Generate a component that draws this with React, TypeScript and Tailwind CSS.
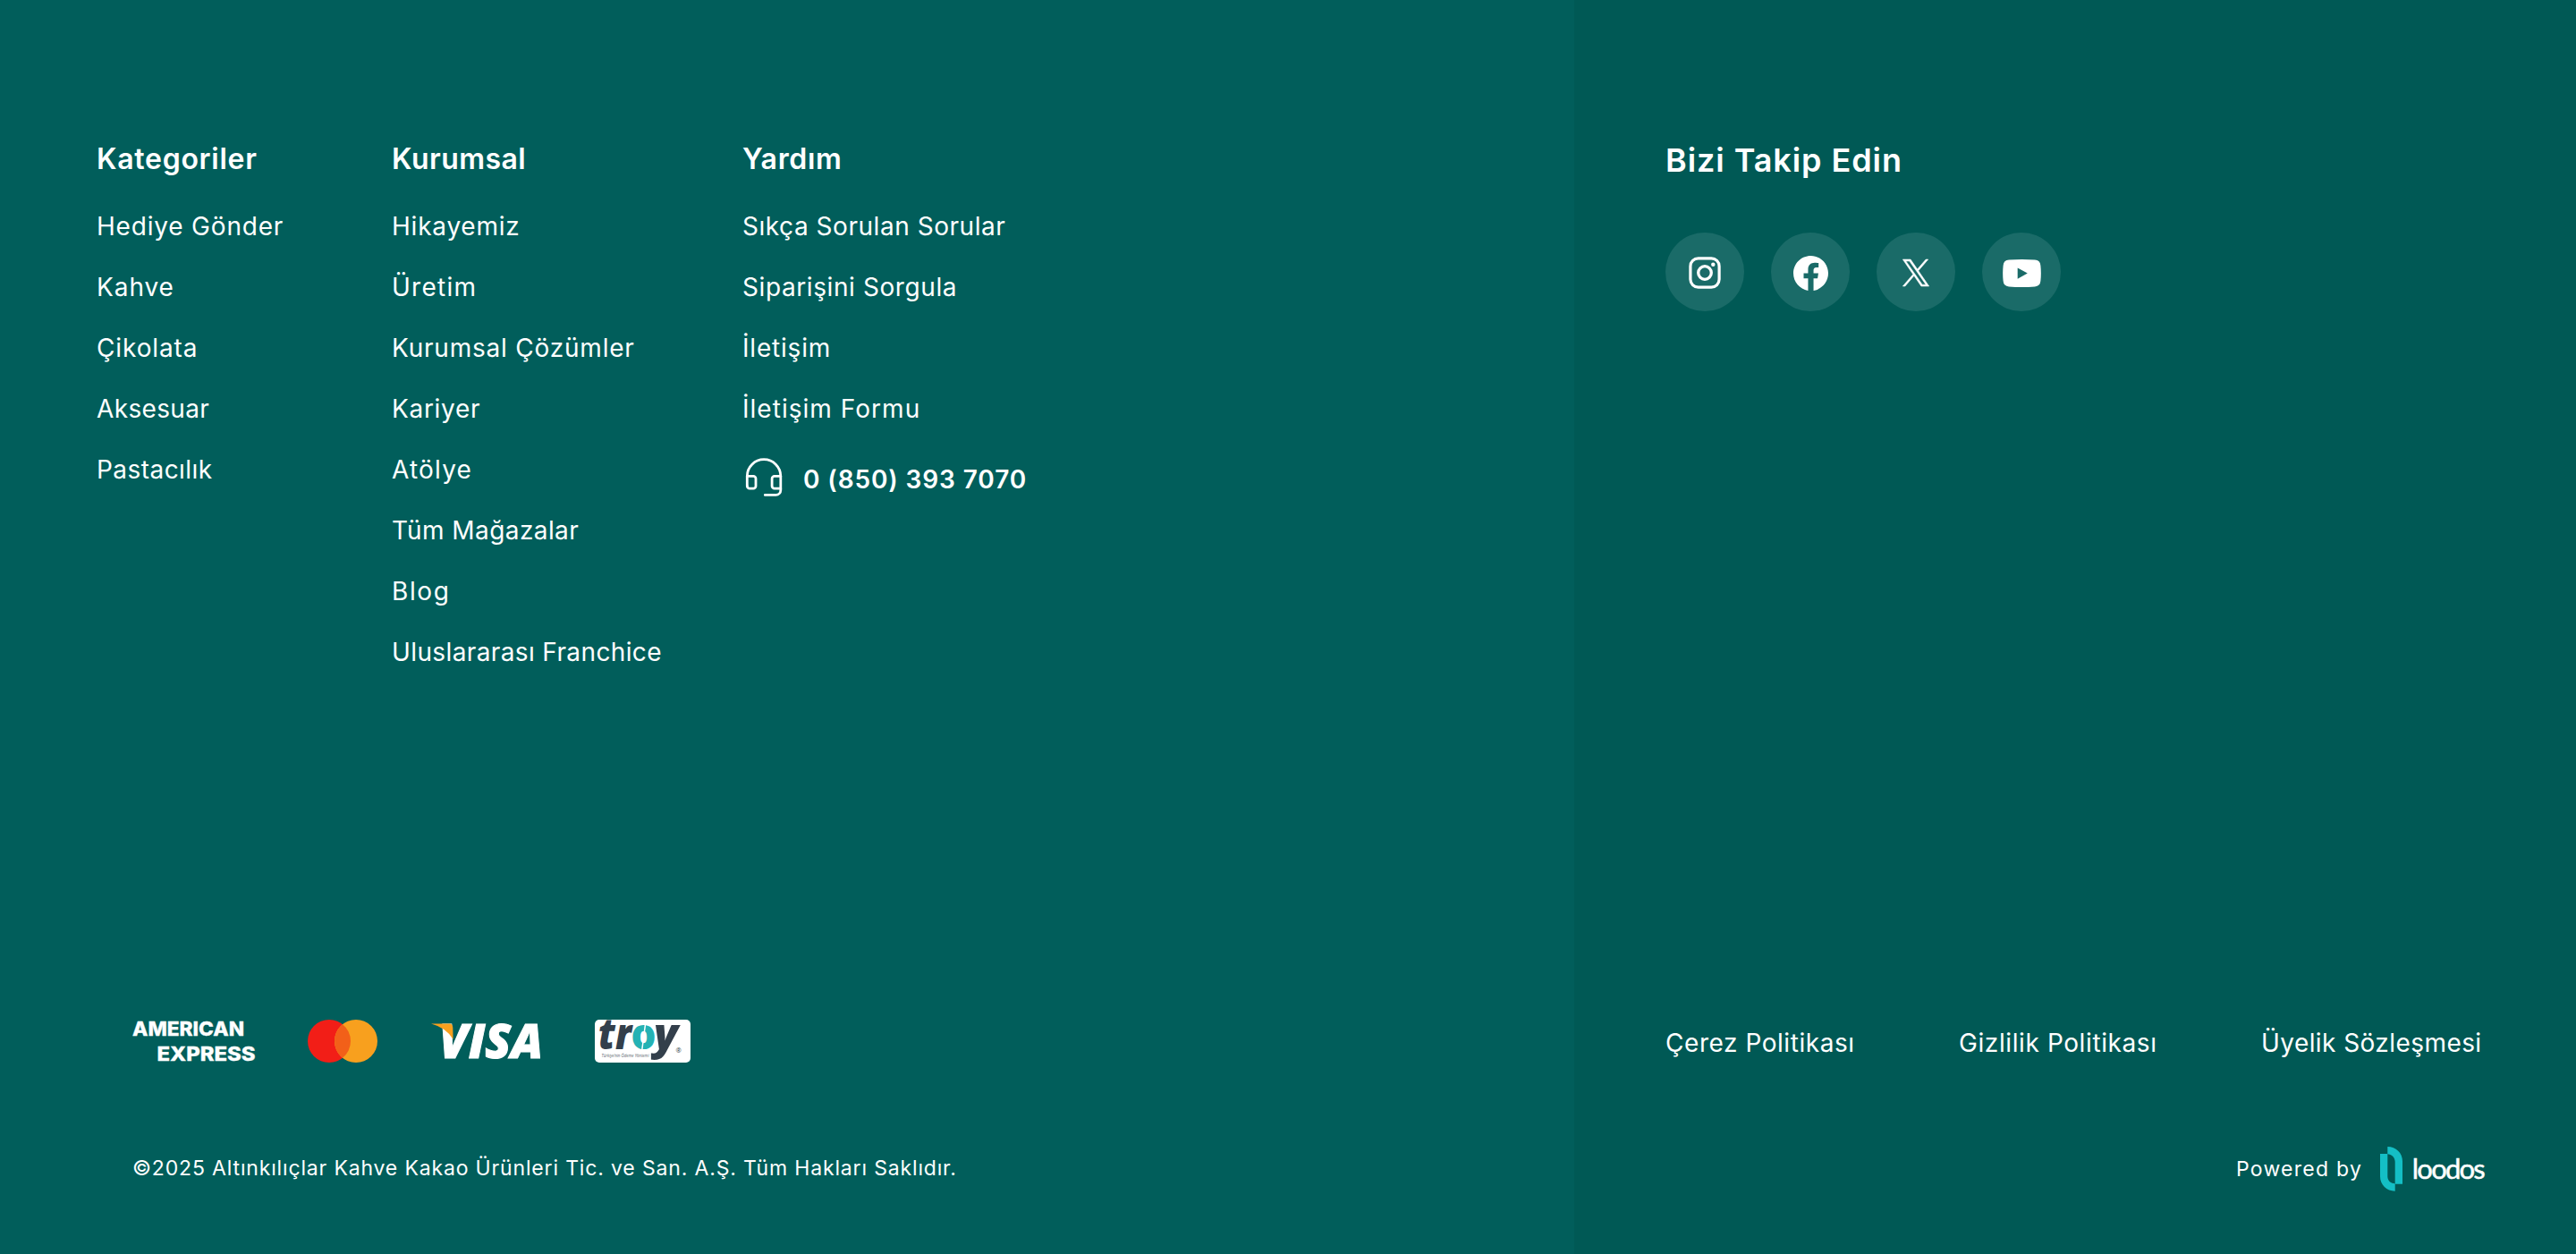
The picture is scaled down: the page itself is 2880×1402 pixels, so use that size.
import type { ReactNode } from 'react';

interface FooterLink {
  label: string;
  tracking: string;
}

interface LinkGroup {
  title: FooterLink;
  width: string;
  links: FooterLink[];
}

const GROUPS: LinkGroup[] = [
  {
    title: { label: 'Kategoriler', tracking: 'tracking-[0.72px]' },
    width: 'w-[330px]',
    links: [
      { label: 'Hediye Gönder', tracking: 'tracking-[0.81px]' },
      { label: 'Kahve', tracking: 'tracking-[0.93px]' },
      { label: 'Çikolata', tracking: 'tracking-[0.89px]' },
      { label: 'Aksesuar', tracking: 'tracking-[0.36px]' },
      { label: 'Pastacılık', tracking: 'tracking-[0.45px]' },
    ],
  },
  {
    title: { label: 'Kurumsal', tracking: 'tracking-[0.47px]' },
    width: 'w-[392px]',
    links: [
      { label: 'Hikayemiz', tracking: 'tracking-[0.78px]' },
      { label: 'Üretim', tracking: 'tracking-[1.28px]' },
      { label: 'Kurumsal Çözümler', tracking: 'tracking-[0.79px]' },
      { label: 'Kariyer', tracking: 'tracking-[0.7px]' },
      { label: 'Atölye', tracking: 'tracking-[1.19px]' },
      { label: 'Tüm Mağazalar', tracking: 'tracking-[0.42px]' },
      { label: 'Blog', tracking: 'tracking-[1.6px]' },
      { label: 'Uluslararası Franchice', tracking: 'tracking-[0.38px]' },
    ],
  },
  {
    title: { label: 'Yardım', tracking: 'tracking-[0.68px]' },
    width: 'w-[420px]',
    links: [
      { label: 'Sıkça Sorulan Sorular', tracking: 'tracking-[0.54px]' },
      { label: 'Siparişini Sorgula', tracking: 'tracking-[0.59px]' },
      { label: 'İletişim', tracking: 'tracking-[0.8px]' },
      { label: 'İletişim Formu', tracking: 'tracking-[1.03px]' },
    ],
  },
];

function HeadsetIcon() {
  return (
    <svg viewBox="0 0 48 48" className="h-12 w-12" fill="none" stroke="white" strokeWidth="2.8" strokeLinecap="round" strokeLinejoin="round">
      <path d="M5.3 32V21.4a18.75 18.75 0 0 1 37.5 0V37a5.4 5.4 0 0 1-5.4 5.4H25.3" />
      <path d="M5.3 21.4h6.9a2.8 2.8 0 0 1 2.8 2.8v8.2a2.8 2.8 0 0 1-2.8 2.8H8.1a2.8 2.8 0 0 1-2.8-2.8" />
      <path d="M42.8 21.4h-6.9a2.8 2.8 0 0 0-2.8 2.8v8.2a2.8 2.8 0 0 0 2.8 2.8h6.9" />
    </svg>
  );
}

function InstagramIcon() {
  return (
    <svg viewBox="0 0 36 36" className="h-9 w-9" fill="none" stroke="white">
      <rect x="1.9" y="1.9" width="32.2" height="32.2" rx="8.8" strokeWidth="3.2" />
      <circle cx="18" cy="18" r="7.3" strokeWidth="3.3" />
      <circle cx="27.3" cy="8.8" r="2.2" fill="white" stroke="none" />
    </svg>
  );
}

function FacebookIcon() {
  return (
    <svg viewBox="0 0 24 24" className="h-[39px] w-[39px]" fill="white">
      <path d="M24 12.073c0-6.627-5.373-12-12-12s-12 5.373-12 12c0 5.99 4.388 10.954 10.125 11.854v-8.385H7.078v-3.47h3.047V9.43c0-3.007 1.792-4.669 4.533-4.669 1.312 0 2.686.235 2.686.235v2.953H15.83c-1.491 0-1.956.925-1.956 1.874v2.25h3.328l-.532 3.47h-2.796v8.385C19.612 23.027 24 18.062 24 12.073z" />
    </svg>
  );
}

function XIcon() {
  return (
    <svg viewBox="0 0 24 24" className="h-[30px] w-[30px] overflow-visible" fill="white" stroke="white" strokeWidth="0.45">
      <path d="M14.234 10.162 22.977 0h-2.072l-7.591 8.824L7.251 0H.258l9.168 13.343L.258 24H2.33l8.016-9.318L16.749 24h6.993zm-2.837 3.299-.929-1.329L3.076 1.56h3.182l5.965 8.532.929 1.329 7.754 11.09h-3.182z" />
    </svg>
  );
}

function YoutubeIcon() {
  return (
    <svg viewBox="0 0 43 31" className="h-[31px] w-[43px]">
      <path fill="white" fillRule="evenodd" d="M7 .6Q21.500-.4 36 .6Q42 1 42.400 7Q43.300 15.500 42.400 24Q42 30 36 30.400Q21.500 31.400 7 30.400Q1 30 .6 24Q-.3 15.500.6 7Q1 1 7 .6ZM16.700 9.400V21.700L27.800 15.500Z" />
    </svg>
  );
}

function AmexLogo() {
  return (
    <svg viewBox="0 0 138 48" className="h-12 w-[138px] overflow-visible font-['Inter'] text-[21.4px] font-extrabold" fill="white" stroke="white" strokeWidth="0.3">
      <text x="0" y="17.8" textLength="125" lengthAdjust="spacingAndGlyphs">AMERICAN</text>
      <text x="27.5" y="46" textLength="110" lengthAdjust="spacingAndGlyphs">EXPRESS</text>
    </svg>
  );
}

function MastercardLogo() {
  return (
    <svg viewBox="0 0 78 48" className="h-12 w-[78px]">
      <circle cx="24" cy="24" r="24" fill="#f21e17" />
      <circle cx="54" cy="24" r="24" fill="#f8a01e" />
      <path d="M39 5.270A24 24 0 0 1 39 42.730A24 24 0 0 1 39 5.270Z" fill="#f26019" />
    </svg>
  );
}

function VisaLogo() {
  return (
    <svg viewBox="0 0 124 48" className="h-12 w-[124px] overflow-visible">
      <text x="9" y="43" textLength="116" lengthAdjust="spacingAndGlyphs" fill="white" stroke="white" strokeWidth="1" className="font-['Open_Sans'] text-[53px] font-extrabold italic">
        VISA
      </text>
      <path d="M0 4.500H21.500Q24 5 24.300 9L24.600 22Q17 9 0 4.500Z" fill="#f8a01e" />
    </svg>
  );
}

function TroyLogo() {
  return (
    <svg viewBox="0 0 107 48" className="h-12 w-[107px] overflow-visible font-['Open_Sans']">
      <rect width="107" height="48" rx="5" fill="white" />
      <g className="text-[47px] font-extrabold" fill="#333f4b">
        <text x="4" y="32.5" textLength="37" lengthAdjust="spacingAndGlyphs" className="italic">tr</text>
        <text x="40.5" y="32.500" textLength="28" lengthAdjust="spacingAndGlyphs" fill="#24b2b4">o</text>
        <text x="66" y="32.5" textLength="27" lengthAdjust="spacingAndGlyphs" className="italic">y</text>
      </g>
      <path d="M56.500 5L52.500 36" stroke="white" strokeWidth="1.500" />
      <text x="7.500" y="41.500" textLength="53" lengthAdjust="spacingAndGlyphs" fill="#5c6670" className="text-[5px] italic">
        Türkiye’nin Ödeme Yöntemi
      </text>
      <text x="90.500" y="36.500" fill="#333f4b" className="text-[7.500px]">®</text>
    </svg>
  );
}

function LoodosLogo() {
  return (
    <svg viewBox="0 0 118 50" className="h-[50px] w-[118px] overflow-visible">
      <path d="M0 8H8.300V33.300C8.300 38.300 12.300 41.300 16.700 41.300V49.700C7.300 49.700 0 42.700 0 33.300Z" fill="#14bfc5" />
      <path d="M8.300 0C17.700 0 25 7 25 16.300V41.700H16.700V17C16.700 12 12.700 8.300 8.300 8.300Z" fill="#14bfc5" />
      <text x="35.800" y="35.600" textLength="82" lengthAdjust="spacing" fill="white" stroke="white" strokeWidth="0.5" className="font-['Lato'] text-[31px]">
        loodos
      </text>
    </svg>
  );
}

function Social({ children }: { children: ReactNode }) {
  return (
    <a className="flex h-[88px] w-[88px] items-center justify-center rounded-full bg-[#1a6b68] pt-0.5">
      {children}
    </a>
  );
}

export default function App() {
  return (
    <footer className="flex h-[1402px] w-[2880px] bg-[#015e5b] font-['Inter',sans-serif] text-[28px] leading-7 whitespace-nowrap text-white">
      <div className="flex w-[1760px] flex-col justify-between pt-[162px] pb-[82px]">
        <div className="flex pl-[108px]">
          {GROUPS.map((group, i) => (
            <div key={group.title.label} className={group.width}>
              <h3 className={`text-[32px] leading-8 font-semibold ${group.title.tracking}`}>{group.title.label}</h3>
              <ul className="mt-[45px] flex flex-col gap-10">
                {group.links.map((link) => (
                  <li key={link.label} className={link.tracking}>{link.label}</li>
                ))}
              </ul>
              {i === 2 && (
                <div className="mt-10 flex items-center gap-5">
                  <HeadsetIcon />
                  <span className="pt-px font-semibold tracking-[0.89px]">0 (850) 393 7070</span>
                </div>
              )}
            </div>
          ))}
        </div>

        <div className="pl-[148px]">
          <div className="flex items-center">
            <AmexLogo />
            <div className="ml-[58px]"><MastercardLogo /></div>
            <div className="ml-[60px]"><VisaLogo /></div>
            <div className="ml-[59px]"><TroyLogo /></div>
          </div>
          <p className="mt-[104px] text-[23px] tracking-[0.84px]">
            ©2025 Altınkılıçlar Kahve Kakao Ürünleri Tic. ve San. A.Ş. Tüm Hakları Saklıdır.
          </p>
        </div>
      </div>

      <div className="flex w-[1120px] flex-col justify-between bg-[#005955] pt-[161px] pb-[70px] pl-[102px]">
        <div>
          <h3 className="text-[36px] leading-9 font-semibold tracking-[0.93px]">Bizi Takip Edin</h3>
          <div className="mt-[63px] flex gap-[30px]">
            <Social><InstagramIcon /></Social>
            <Social><FacebookIcon /></Social>
            <Social><XIcon /></Social>
            <Social><YoutubeIcon /></Social>
          </div>
        </div>

        <div>
          <div className="flex">
            <span className="w-[328px] tracking-[0.55px]">Çerez Politikası</span>
            <span className="w-[338px] tracking-[0.6px]">Gizlilik Politikası</span>
            <span className="tracking-[0.43px]">Üyelik Sözleşmesi</span>
          </div>
          <div className="mt-[102px] flex items-center justify-end pr-[101px]">
            <span className="w-[161px] text-[23px] tracking-[1.25px]">Powered by</span>
            <LoodosLogo />
          </div>
        </div>
      </div>
    </footer>
  );
}
